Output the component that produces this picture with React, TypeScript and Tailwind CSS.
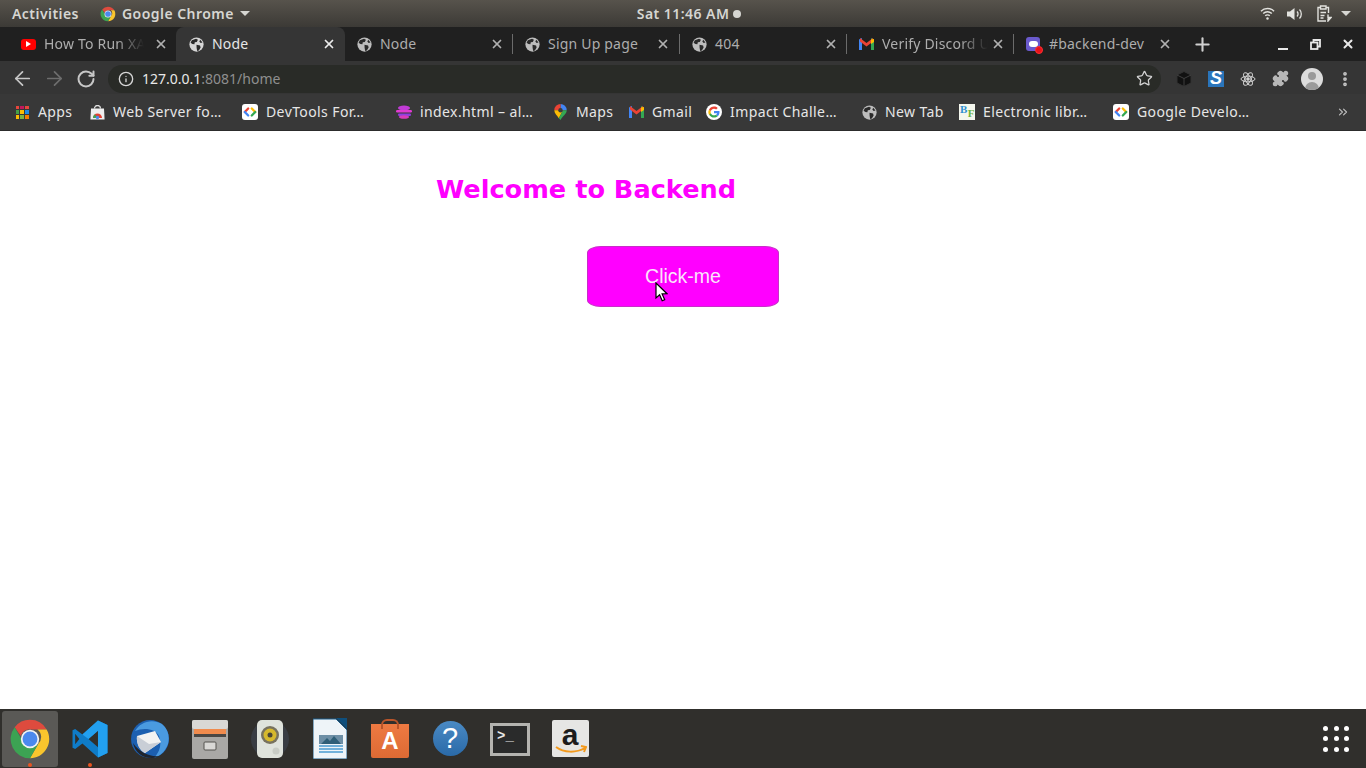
import { ArrowLeft, ArrowRight, RotateCw, Info, Star, Plus, X, Puzzle, EllipsisVertical, ChevronsRight } from "lucide-react";
import type { ReactNode } from "react";

const uiFont = "font-['Noto_Sans',sans-serif]";

const Globe = ({ light = false }: { light?: boolean }) => (
  <svg width="15" height="15" viewBox="0 0 16 16" className="shrink-0">
    <circle cx="8" cy="8" r="7.6" fill={light ? "#d6d6d6" : "#bdbdbd"} />
    <path d="M3 3.500 7.500 1.800 9.500 3 8.300 5.200 6.200 5.600 5.700 7.600 3.600 7.400 1.700 6ZM8 8.300l3.800.8.6 2-1.900 3.200-1.800.6-.6-3.500ZM12 2.800l2.400 3-2 .5-1.400-1.600Z" fill="#2a2a2a" />
  </svg>
);

const GmailIcon = () => (
  <svg width="15" height="12" viewBox="0 0 15 12" className="shrink-0">
    <path d="M0 1.500 3 0v12H0Z" fill="#4285f4" />
    <path d="M12 0l3 1.500V12h-3Z" fill="#34a853" />
    <path d="M1 0 7.500 5 14 0v3.500L7.500 8.500 1 3.500Z" fill="#ea4335" />
    <path d="M12 1.500 15 1v3l-3 2Z" fill="#fbbc04" />
  </svg>
);

const ChromeIcon = ({ size }: { size: number }) => (
  <svg width={size} height={size} viewBox="0 0 48 48" className="shrink-0">
    <path d="M24 2a22 22 0 0 1 19 11H24a11 11 0 0 0-10.500 7.500L6.500 10.500A22 22 0 0 1 24 2Z" fill="#de4b3e" />
    <path d="M43 13a22 22 0 0 1-19 33l9.500-16.500a11 11 0 0 0-1-16.500Z" fill="#f9c52d" />
    <path d="M6.500 10.500 16 27a11 11 0 0 0 17.500 2.500L24 46A22 22 0 0 1 6.500 10.500Z" fill="#3ca353" />
    <circle cx="24" cy="24" r="10.500" fill="#f2f2f2" />
    <circle cx="24" cy="24" r="8.500" fill="#4b89ee" />
  </svg>
);

const GoogleG = () => (
  <span className="flex h-4 w-4 shrink-0 items-center justify-center rounded-full bg-white">
    <svg width="12" height="12" viewBox="0 0 48 48">
      <path d="M46 24.500c0-1.500-.1-3-.4-4.500H24v8.500h12.400A10.600 10.600 0 0 1 31.800 35.400l7.200 5.600C43.300 37 46 31.300 46 24.500Z" fill="#4285f4" />
      <path d="M24 46c6 0 11-2 14.900-5.400l-7.200-5.600c-2 1.400-4.600 2.200-7.700 2.200-5.900 0-10.900-4-12.700-9.300l-7.400 5.700C8.600 41.200 15.800 46 24 46Z" fill="#34a853" />
      <path d="M11.300 28.900a13 13 0 0 1 0-8.500l-7.400-5.800a22 22 0 0 0 0 20Z" fill="#fbbc04" />
      <path d="M24 10.800c3.300 0 6.200 1.100 8.500 3.300l6.400-6.400C35 4.100 30 2 24 2 15.800 2 8.600 6.800 3.900 14.600l7.400 5.800C13.100 15 18.100 10.800 24 10.800Z" fill="#ea4335" />
    </svg>
  </span>
);

const DevIcon = () => (
  <span className="flex h-4 w-4 shrink-0 items-center justify-center rounded-[3px] bg-white">
    <svg width="16" height="16" viewBox="0 0 16 16" fill="none" strokeWidth="2.300" strokeLinecap="round">
      <path d="M6.200 4.500 2.800 8" stroke="#ea4335" />
      <path d="M2.800 8l3.400 3.500" stroke="#4285f4" />
      <path d="M9.800 4.500 13.200 8" stroke="#fbbc04" />
      <path d="M13.200 8l-3.400 3.500" stroke="#34a853" />
    </svg>
  </span>
);

const AppsIcon = () => (
  <span className="grid h-[13px] w-[13px] shrink-0 grid-cols-3 gap-px">
    <i className="bg-[#e8453c]" /><i className="bg-[#c2185b]" /><i className="bg-[#e8453c]" />
    <i className="bg-[#43a047]" /><i className="bg-[#fbbc04]" /><i className="bg-[#1e88e5]" />
    <i className="bg-[#fbbc04]" /><i className="bg-[#7cb342]" /><i className="bg-[#f57c00]" />
  </span>
);

const WebServerIcon = () => (
  <svg width="15" height="15" viewBox="0 0 15 15" className="shrink-0">
    <path d="M4.500 3.500a3 3 0 0 1 6 0" fill="none" stroke="#e0e0e0" strokeWidth="1.300" />
    <path d="M1 3.500h13l.6 11H.4Z" fill="#efefef" />
    <path d="M3 13a4.500 4.500 0 0 1 9 0Z" fill="#e34133" />
    <path d="M3 13a4.500 4.500 0 0 1 2-3.700L7.500 13Z" fill="#3ca353" />
    <circle cx="7.500" cy="12.500" r="1.700" fill="#4b89ee" />
  </svg>
);

const IndexIcon = () => (
  <svg width="16" height="14" viewBox="0 0 16 14" className="shrink-0">
    <ellipse cx="8" cy="3" rx="6" ry="2.500" fill="#c13bd6" />
    <rect x="0" y="5" width="16" height="2.500" rx="1.200" fill="#e23bd0" />
    <rect x="2" y="8.500" width="13" height="2.500" rx="1.200" fill="#8f3fe0" />
    <ellipse cx="8" cy="12" rx="5" ry="1.800" fill="#d93bb8" />
  </svg>
);

const MapsIcon = () => (
  <svg width="13" height="16" viewBox="0 0 13 16" className="shrink-0">
    <path d="M6.500 0A6.200 6.200 0 0 1 12.700 6.200L6.500 6.200Z" fill="#4285f4" />
    <path d="M6.500 0A6.200 6.200 0 0 0 .3 6.200L6.500 6.200Z" fill="#ea4335" />
    <path d="M.3 6.200c0 3 3 5.500 4.500 8L9 6.200Z" fill="#fbbc04" />
    <path d="M12.700 6.200c0 4-4.500 5.800-6.200 9.800L4.800 14.200 9 6.200Z" fill="#34a853" />
    <circle cx="6.500" cy="6.200" r="2.200" fill="#3b3b3b" />
  </svg>
);

const ElectronicIcon = () => (
  <span className="flex h-4 w-4 shrink-0 items-start overflow-hidden bg-[#f4f7ee] pl-px font-['Liberation_Serif',serif] text-[11px] leading-[11px] font-bold">
    <span className="text-[#2f8fd0]">B</span>
    <span className="mt-1 text-[#6db33f]">F</span>
  </span>
);

const DiscordIcon = () => (
  <span className="relative flex h-[14px] w-[15px] shrink-0 items-center">
    <span className="flex h-[14px] w-[14px] items-center justify-center rounded-[3px] bg-[#6a5acd]">
      <span className="h-[6px] w-[9px] rounded-full bg-white" />
    </span>
    <span className="absolute -right-[2px] -bottom-[3px] h-2 w-2 rounded-full border border-[#ff3030] bg-[#e8121b]" />
  </span>
);

const tabs: { title: string; icon: ReactNode; active?: boolean; width: string; pad: string; close: string; fade?: boolean; divider?: boolean }[] = [
  {
    title: "How To Run XA",
    icon: (
      <span className="flex h-[11px] w-[15px] shrink-0 items-center justify-center rounded-[3px] bg-[#f00]">
        <span className="h-0 w-0 border-y-[3px] border-l-[5px] border-y-transparent border-l-white" />
      </span>
    ),
    width: "w-[168px]",
    pad: "pl-[13px]",
    close: "mr-[8px]",
    fade: true,
  },
  { title: "Node", icon: <Globe light />, active: true, width: "w-[169px]", pad: "pl-[13px]", close: "mr-[9px]" },
  { title: "Node", icon: <Globe />, width: "w-[167px]", pad: "pl-[12px]", close: "mr-[8px]" },
  { title: "Sign Up page", icon: <Globe />, width: "w-[167px]", pad: "pl-[13px]", close: "mr-[9px]", divider: true },
  { title: "404", icon: <Globe />, width: "w-[167px]", pad: "pl-[13px]", close: "mr-[8px]", divider: true },
  { title: "Verify Discord U", icon: <GmailIcon />, width: "w-[167px]", pad: "pl-[13px]", close: "mr-[8px]", fade: true, divider: true },
  { title: "#backend-dev", icon: <DiscordIcon />, width: "w-[167px]", pad: "pl-[13px]", close: "mr-[8px]", divider: true },
];

const bookmarks: { label: string; icon: ReactNode; width: string }[] = [
  { label: "Apps", icon: <AppsIcon />, width: "w-[75px]" },
  { label: "Web Server fo…", icon: <WebServerIcon />, width: "w-[153px]" },
  { label: "DevTools For…", icon: <DevIcon />, width: "w-[154px]" },
  { label: "index.html – al…", icon: <IndexIcon />, width: "w-[156px]" },
  { label: "Maps", icon: <MapsIcon />, width: "w-[76px]" },
  { label: "Gmail", icon: <GmailIcon />, width: "w-[78px]" },
  { label: "Impact Challe…", icon: <GoogleG />, width: "w-[155px]" },
  { label: "New Tab", icon: <Globe />, width: "w-[98px]" },
  { label: "Electronic libr…", icon: <ElectronicIcon />, width: "w-[154px]" },
  { label: "Google Develo…", icon: <DevIcon />, width: "w-[160px]" },
];

const TopBar = () => (
  <div className={`flex h-[27px] shrink-0 items-center bg-gradient-to-b from-[#57534c] to-[#3c3a36] text-[14px] font-semibold tracking-[0.45px] text-[#d6d6d2] ${uiFont}`}>
    <span className="ml-3 w-[88px]">Activities</span>
    <ChromeIcon size={16} />
    <span className="ml-[6px]">Google Chrome</span>
    <span className="ml-[6px] h-0 w-0 border-x-[5px] border-t-[5px] border-x-transparent border-t-[#d6d6d2]" />
    <span className="ml-[387px]">Sat 11:46 AM</span>
    <span className="ml-1 h-2 w-2 rounded-full bg-[#d6d6d2]" />
    <div className="ml-auto flex items-center pr-[15px]">
      <svg width="15" height="15" viewBox="0 0 16 15" fill="none" stroke="#e2e2de" strokeWidth="1.500">
        <path d="M1 5a10 10 0 0 1 14 0M3.400 7.600a6.500 6.500 0 0 1 9.200 0M5.600 10a3.300 3.300 0 0 1 4.800 0" />
        <circle cx="8" cy="12.800" r="1.300" fill="#e2e2de" stroke="none" />
      </svg>
      <svg width="16" height="14" viewBox="0 0 16 14" className="ml-3" fill="none" stroke="#e2e2de" strokeWidth="1.300">
        <path d="M0 4.500h3L7.500 1v12L3 9.500H0Z" fill="#e2e2de" stroke="none" />
        <path d="M10 4.500a3.500 3.500 0 0 1 0 5M12.500 2.500a6.500 6.500 0 0 1 0 9" />
      </svg>
      <svg width="15" height="17" viewBox="0 0 15 17" className="ml-[14px]" fill="none" stroke="#e2e2de" strokeWidth="1.400">
        <path d="M3.500 2.500H1v13.500h8M9 2.500h2.500V8M3.500 1h5.500v3H3.500ZM3.500 7.500h5.500M3.500 10.500h4M3.500 13h3" />
        <path d="M11 9.500v3h3l-3 3.500v-2.500" fill="#e2e2de" />
      </svg>
      <span className="ml-[9px] h-0 w-0 border-x-[5px] border-t-[5px] border-x-transparent border-t-[#d6d6d2]" />
    </div>
  </div>
);

const TabStrip = () => (
  <div className={`flex h-[34px] shrink-0 items-stretch bg-[#202020] pl-[8px] text-[14px] tracking-[0.2px] ${uiFont}`}>
    <div className="flex">
      {tabs.map((tab, i) => (
        <div
          key={i}
          className={`relative flex items-center ${tab.width} ${tab.pad} ${tab.active ? "rounded-t-lg bg-[#353535] text-[#e6e6e6]" : "text-[#adadad]"}`}
        >
          {tab.divider && <span className="absolute top-[7px] left-0 h-5 w-px bg-[#6b6b6b]" />}
          {tab.icon}
          {tab.fade ? (
            <span className="mb-px ml-2 whitespace-nowrap [mask-image:linear-gradient(to_right,black_72%,transparent_98%)]">{tab.title}</span>
          ) : (
            <span className="mb-px ml-2 whitespace-nowrap">{tab.title}</span>
          )}
          <X size={14} strokeWidth={3} className={`ml-auto shrink-0 ${tab.close} ${tab.active ? "text-[#ececec]" : "text-[#b0b0b0]"}`} />
        </div>
      ))}
    </div>
    <div className="ml-3 flex items-center">
      <Plus size={21} strokeWidth={2.4} className="text-[#d0d0d0]" />
    </div>
    <div className="ml-auto flex items-center pr-[11px] text-[#e8e8e8]">
      <span className="mt-[10px] h-[2px] w-[10px] bg-[#e8e8e8]" />
      <svg width="11" height="11" viewBox="0 0 11 11" className="ml-[22px]" fill="none" stroke="#e8e8e8" strokeWidth="1.800">
        <path d="M3.500 3V1h6.500v6.500H8" />
        <rect x="1" y="3.500" width="6.500" height="6.500" />
      </svg>
      <X size={14} strokeWidth={3.4} className="ml-[20px]" />
    </div>
  </div>
);

const Toolbar = () => (
  <div className={`flex h-[33px] shrink-0 items-center bg-[#353535] pt-[2px] text-[14px] ${uiFont}`}>
    <ArrowLeft size={23} strokeWidth={1.8} className="ml-[11px] text-[#c7c7c7]" />
    <ArrowRight size={23} strokeWidth={1.8} className="ml-[9px] text-[#6e6e6e]" />
    <RotateCw size={20} strokeWidth={2.4} className="ml-[10px] text-[#c7c7c7]" />
    <div className="ml-[12px] flex h-7 w-[1053px] items-center rounded-full bg-[#292b27] pl-[10px]">
      <Info size={16} strokeWidth={2} className="text-[#d8d8d8]" />
      <span className="ml-2 text-[#e8e8e8]">127.0.0.1</span>
      <span className="text-[#8f8f8f]">:8081/home</span>
      <Star size={17} strokeWidth={1.8} className="mr-2 ml-auto text-[#d2d2d2]" />
    </div>
    <svg width="16" height="16" viewBox="0 0 16 16" className="ml-[15px]">
      <path d="M8 .5 15 4v8l-7 3.500L1 12V4Z" fill="#111" stroke="#333" />
      <path d="M1 4l7 3.500L15 4M8 7.500v8" fill="none" stroke="#4a4a4a" strokeWidth=".8" />
    </svg>
    <span className="ml-4 flex h-4 w-4 items-center justify-center bg-[#2a75bb] font-['Liberation_Sans',sans-serif] text-[18px] font-bold text-white italic">S</span>
    <svg width="16" height="16" viewBox="0 0 16 16" className="ml-4" fill="none" stroke="#d0d0d0" strokeWidth="1">
      <ellipse cx="8" cy="8" rx="7" ry="2.800" />
      <ellipse cx="8" cy="8" rx="7" ry="2.800" transform="rotate(60 8 8)" />
      <ellipse cx="8" cy="8" rx="7" ry="2.800" transform="rotate(120 8 8)" />
      <circle cx="8" cy="8" r="1.300" fill="#d0d0d0" />
    </svg>
    <Puzzle size={17} fill="#b8b8b8" className="ml-4 text-[#b8b8b8]" />
    <span className="relative ml-[12px] h-[22px] w-[22px] overflow-hidden rounded-full bg-[#dcdcdc]">
      <span className="absolute top-1 left-[7px] h-2 w-2 rounded-full bg-[#9a9a9a]" />
      <span className="absolute top-[14px] left-[4px] h-[10px] w-[14px] rounded-t-full bg-[#9a9a9a]" />
    </span>
    <EllipsisVertical size={18} strokeWidth={3} className="ml-[13px] text-[#c7c7c7]" />
  </div>
);

const Bookmarks = () => (
  <div className={`flex h-[37px] shrink-0 items-center border-b border-[#2c2c2c] bg-[#383838] pl-[14px] text-[14px] tracking-[0.4px] text-[#e6e6e6] ${uiFont}`}>
    {bookmarks.map((b) => (
      <div key={b.label} className={`flex items-center gap-2 whitespace-nowrap ${b.width}`}>
        <span className="flex w-[16px] justify-center">{b.icon}</span>
        <span className="mb-px">{b.label}</span>
      </div>
    ))}
    <ChevronsRight size={14} className="mr-[16px] ml-auto text-[#bdbdbd]" />
  </div>
);

const Cursor = () => (
  <svg width="13" height="20" viewBox="0 0 13 20" className="absolute top-[35px] left-[67px]">
    <path d="M1 1v15l3.600-3.300 2.600 6 2.500-1-2.600-5.800 4.900-.2Z" fill="#fff" stroke="#000" strokeWidth="1.200" />
  </svg>
);

const Page = () => (
  <main className="flex flex-1 flex-col bg-white">
    <h1 className="mt-[42px] ml-[436px] font-['DejaVu_Sans',sans-serif] text-[25.600px] leading-[32px] font-bold text-[#f0f]">
      Welcome to Backend
    </h1>
    <button className="relative mt-[41px] ml-[587px] h-[61px] w-[192px] rounded-[14px/7px] border border-[#c82fc8] bg-[#f0f] font-['Liberation_Sans',sans-serif] text-[19.500px] text-[#fbe3fb]">
      Click-me
      <Cursor />
    </button>
  </main>
);

const RunDot = () => <span className="absolute bottom-0 left-[26px] h-1 w-1 rounded-full bg-[#e95420]" />;

const Dock = () => (
  <div className="flex h-[59px] shrink-0 items-center bg-[#302f2c] pl-[2px]">
    <div className="relative flex h-[56px] w-[56px] items-center justify-center rounded-[3px] bg-[#5a5956]">
      <ChromeIcon size={42} />
      <RunDot />
    </div>
    <div className="relative ml-[4px] flex h-[56px] w-[56px] items-center justify-center">
      <svg width="38" height="38" viewBox="0 0 100 100">
        <path fillRule="evenodd" d="M71 99 96 87V13L71 1 30 38 11 24 4 27V73l7 3L30 62ZM71 28 46 50 71 72ZM11 36 22 50 11 64Z" fill="#0f7cc8" />
        <path fillRule="evenodd" d="M71 1 96 13V87L71 99ZM71 1V28L46 50 30 38Z" fill="#22a0f0" />
      </svg>
      <RunDot />
    </div>
    <div className="ml-[4px] flex h-[56px] w-[56px] items-center justify-center">
      <svg width="40" height="40" viewBox="0 0 40 40">
        <circle cx="20" cy="20" r="19" fill="#1c5fb0" />
        <path d="M5 12C10 3 22-1 32 5c6 5 8 12 6 20-3 8-8 12-14 14 6-6 8-14 5-22C26 10 14 8 5 12Z" fill="#4a9ae0" />
        <path d="M7 17l18-5 6 11-16 11C10 32 6 24 7 17Z" fill="#f2f2f2" />
        <path d="M7 17l12 8 12-2-16 11C10 32 6 24 7 17Z" fill="#c9ced6" />
        <path d="M3 24c2 9 9 15 19 15 3 0 5-1 7-2-9 1-19-3-26-13Z" fill="#20252e" />
      </svg>
    </div>
    <div className="ml-[4px] flex h-[56px] w-[56px] items-center justify-center">
      <svg width="36" height="40" viewBox="0 0 36 40">
        <rect x="0" y="1" width="36" height="39" rx="2" fill="#a9a8a5" />
        <rect x="0" y="1" width="36" height="9" rx="2" fill="#d9d8d5" />
        <rect x="2" y="10" width="32" height="5" fill="#f08b4d" />
        <rect x="2" y="15" width="32" height="3" fill="#4a4744" />
        <rect x="12" y="23" width="12" height="8" rx="1" fill="#d9d8d5" stroke="#55534f" />
      </svg>
    </div>
    <div className="ml-[4px] flex h-[56px] w-[56px] items-center justify-center">
      <svg width="42" height="40" viewBox="0 0 42 40">
        <circle cx="21" cy="20" r="19" fill="#4a5a70" opacity=".35" />
        <rect x="8" y="1" width="26" height="38" rx="5" fill="#dfe3dc" />
        <circle cx="21" cy="16" r="9" fill="#77725f" />
        <circle cx="21" cy="16" r="6.500" fill="#d6b92d" />
        <circle cx="21" cy="16" r="2.500" fill="#4a4636" />
        <circle cx="27" cy="32" r="3.500" fill="#c9cdc6" />
      </svg>
    </div>
    <div className="ml-[4px] flex h-[56px] w-[56px] items-center justify-center">
      <svg width="34" height="41" viewBox="0 0 34 41">
        <path d="M0 1h23l11 11v29H0Z" fill="#eef4f8" stroke="#1a5c8a" />
        <path d="M23 0h11v11Z" fill="#0f4f7c" />
        <rect x="6" y="17" width="24" height="9" fill="#6d8fa6" />
        <path d="M8 26l6-6 3 3 4-5 7 8Z" fill="#2f5f78" />
        <path d="M6 28h24M6 31h24M6 34h24" stroke="#4a9ad0" strokeWidth="1.500" />
      </svg>
    </div>
    <div className="ml-[4px] flex h-[56px] w-[56px] items-center justify-center">
      <div className="relative mt-[5px] flex h-[34px] w-[38px] items-center justify-center rounded-b-[2px] bg-gradient-to-b from-[#ee7a42] to-[#dd6a34] font-['Liberation_Sans',sans-serif] text-[24px] font-bold text-white">
        <span className="absolute -top-[5px] left-[10px] h-[10px] w-[18px] rounded-t-md border-2 border-b-0 border-[#b9552a]" />
        A
      </div>
    </div>
    <div className="ml-[4px] flex h-[56px] w-[56px] items-center justify-center">
      <span className="flex h-[35px] w-[35px] items-center justify-center rounded-full bg-gradient-to-b from-[#4a8ac4] to-[#2a6aa8] font-['Liberation_Sans',sans-serif] text-[29px] text-white">?</span>
    </div>
    <div className="ml-[4px] flex h-[56px] w-[56px] items-center justify-center">
      <div className="mt-[2px] flex h-[33px] w-[40px] items-start border-[3px] border-[#b4b4b0] bg-[#2a2b2b] pt-[2px] pl-[4px] font-['Liberation_Mono',monospace] text-[14px] leading-[16px] font-bold text-[#e8e8e8]">
        &gt;_
      </div>
    </div>
    <div className="ml-[4px] flex h-[56px] w-[56px] items-center justify-center">
      <div className="relative flex h-[37px] w-[37px] justify-center rounded-[2px] bg-[#e6e6e4] font-['Liberation_Sans',sans-serif] text-[30px] leading-[30px] font-bold text-[#1c1c1c]">
        a
        <svg width="32" height="10" viewBox="0 0 32 10" className="absolute bottom-[2px] left-[3px]" fill="none" stroke="#f39a1d" strokeWidth="2">
          <path d="M1 2c8 6 20 6 29 1M26 1l5 1-2 5" />
        </svg>
      </div>
    </div>
    <div className="mr-[17px] ml-auto grid grid-cols-3 gap-[5.500px]">
      {Array.from({ length: 9 }).map((_, i) => (
        <span key={i} className="h-[5px] w-[5px] rounded-full bg-white" />
      ))}
    </div>
  </div>
);

export default function App() {
  return (
    <div className="flex h-[768px] w-[1366px] flex-col overflow-hidden">
      <TopBar />
      <TabStrip />
      <Toolbar />
      <Bookmarks />
      <Page />
      <Dock />
    </div>
  );
}
